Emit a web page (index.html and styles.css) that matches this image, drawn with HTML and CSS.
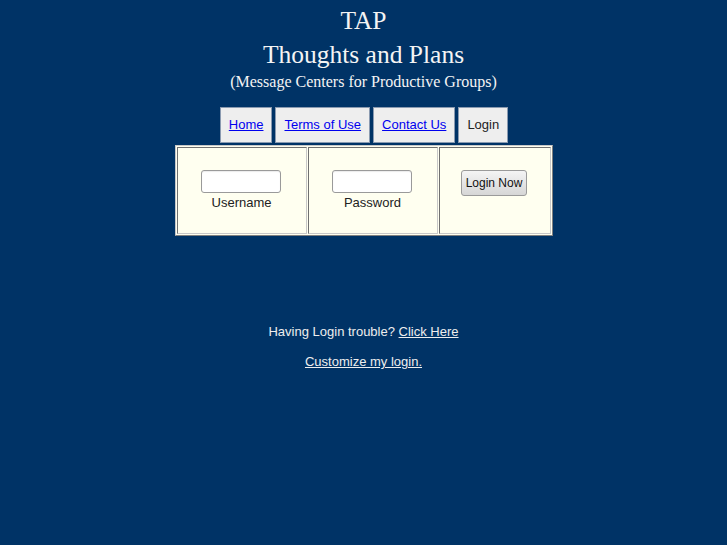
FILE: index.html
```html
<!DOCTYPE html>
<html>
<head>
<meta charset="utf-8">
<title>TAP - Thoughts and Plans</title>
<link rel="stylesheet" href="styles.css">
</head>
<body>
<div class="header">
  <div class="title">TAP</div>
  <div class="title">Thoughts and Plans</div>
  <div class="subtitle">(Message Centers for Productive Groups)</div>
</div>
<nav class="tabs">
  <a class="tab" href="#">Home</a>
  <a class="tab" href="#">Terms of Use</a>
  <a class="tab" href="#">Contact Us</a>
  <span class="tab current">Login</span>
</nav>
<table class="login">
  <tr>
    <td class="cell field">
      <input class="text-input" type="text"><br>
      <span class="label">Username</span>
    </td>
    <td class="cell field">
      <input class="text-input" type="password"><br>
      <span class="label">Password</span>
    </td>
    <td class="cell action">
      <button class="btn" type="button">Login Now</button>
    </td>
  </tr>
</table>
<div class="help">
  <p class="line">Having Login trouble? <a href="#">Click Here</a></p>
  <p class="line"><a href="#">Customize my login.</a></p>
</div>
</body>
</html>
```
FILE: styles.css
```css
html, body {
  margin: 0;
  padding: 0;
  background: #003366;
}
body {
  color: #eeeeee;
  font-family: "Liberation Sans", Arial, sans-serif;
  font-size: 13px;
}
.header {
  padding-top: 4px;
  text-align: center;
  font-family: "Liberation Serif", "Times New Roman", serif;
  color: #f4f4f4;
}
.title {
  font-size: 25.5px;
  line-height: 34px;
}
.subtitle {
  font-size: 16px;
  line-height: 20px;
}
.tabs {
  display: flex;
  justify-content: center;
  gap: 3px;
  margin-top: 15px;
  padding-left: 1px;
}
.tab {
  display: block;
  background: #eeeeee;
  border: 1px solid #8a9ab0;
  padding: 9px 8px;
  line-height: 16px;
  color: #0000ee;
  text-decoration: underline;
}
.tab.current {
  color: #222222;
  text-decoration: none;
}
.login {
  margin: 2px auto 0;
  border-collapse: separate;
  border-spacing: 1px;
  border: 1px solid;
  border-color: #c8c8c8 #808080 #808080 #c8c8c8;
  background: #fffff0;
  color: #222222;
}
.cell {
  border: 1px solid;
  border-color: #707070 #c8c8c8 #c8c8c8 #707070;
  vertical-align: top;
  text-align: center;
  height: 62px;
  padding: 22px 0 1px;
}
.field {
  width: 128px;
}
.action {
  width: 110px;
}
.text-input {
  box-sizing: border-box;
  width: 80px;
  height: 23px;
  margin: 0 0 0 -2px;
  border: 1px solid #9a9a9a;
  border-radius: 3px;
  background: #ffffff;
  box-shadow: inset 0 1px 1px rgba(0,0,0,0.08);
}
.label {
  display: inline-block;
  margin-top: 2px;
  line-height: 15px;
}
.btn {
  box-sizing: border-box;
  width: 66px;
  height: 26px;
  margin-left: -1px;
  border: 1px solid #9a9a9a;
  border-radius: 3px;
  background: linear-gradient(#f4f4f4, #d6d6d6);
  font-family: "Liberation Sans", Arial, sans-serif;
  font-size: 12px;
  color: #111111;
  padding: 0;
}
.help {
  margin-top: 88px;
  text-align: center;
}
.line {
  margin: 0 0 15px;
  line-height: 15px;
}
.help a {
  color: #eeeeee;
}
```
